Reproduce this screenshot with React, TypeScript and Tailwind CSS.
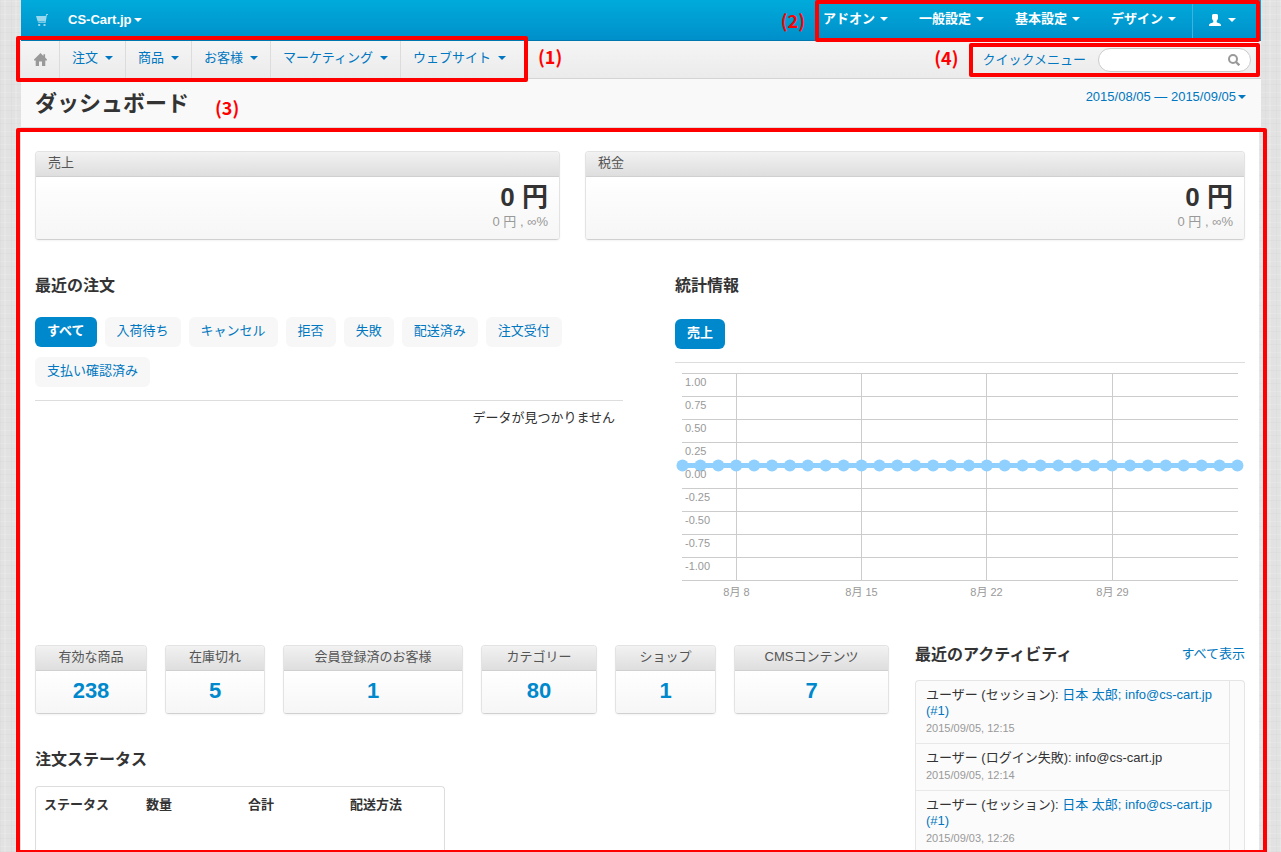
import type { ReactNode } from "react";

const topMenu = ["アドオン", "一般設定", "基本設定", "デザイン"];

const mainMenu = ["注文", "商品", "お客様", "マーケティング", "ウェブサイト"];

const orderFilters = [
  "すべて",
  "入荷待ち",
  "キャンセル",
  "拒否",
  "失敗",
  "配送済み",
  "注文受付",
  "支払い確認済み",
];

const stats = [
  { label: "有効な商品", value: 238 },
  { label: "在庫切れ", value: 5 },
  { label: "会員登録済のお客様", value: 1 },
  { label: "カテゴリー", value: 80 },
  { label: "ショップ", value: 1 },
  { label: "CMSコンテンツ", value: 7 },
];

const statusColumns = ["ステータス", "数量", "合計", "配送方法"];

const activities = [
  {
    event: "ユーザー (セッション):",
    user: "日本 太郎; info@cs-cart.jp",
    userId: "(#1)",
    date: "2015/09/05, 12:15",
  },
  {
    event: "ユーザー (ログイン失敗): info@cs-cart.jp",
    date: "2015/09/05, 12:14",
  },
  {
    event: "ユーザー (セッション):",
    user: "日本 太郎; info@cs-cart.jp",
    userId: "(#1)",
    date: "2015/09/03, 12:26",
  },
];

const Caret = () => (
  <span className="inline-block border-x-4 border-t-4 border-x-transparent border-t-current" />
);

const CartIcon = () => (
  <svg className="w-3 h-3" viewBox="0 0 12 12" fill="currentColor">
    <path d="M10.2 0H12v1h-1.1L9.5 9H2.2V8.2h6.4l.2-.8H1.7L0 2h9.7z" />
    <path d="M2.2 10h2v1.9h-2zM7.5 10h2v1.9h-2z" />
  </svg>
);

const HomeIcon = () => (
  <svg className="w-[13px] h-[13px]" viewBox="0 0 13 13" fill="currentColor">
    <path d="M6.5 0 9.4 2.9V1.3h1.7v3.3L13 6.6v.9h-1.7V13H8V8.5H5V13H1.7V7.5H0v-.9z" />
  </svg>
);

const UserIcon = () => (
  <svg className="w-3 h-3" viewBox="0 0 12 12" fill="currentColor">
    <path d="M4.5 0h3C8.500 0 9 .8 9 1.800V4c0 1.200-.6 2.200-1.300 2.700v1.500c.8.6 4.300 1 4.300 2.800v1H0v-1c0-1.800 3.500-2.200 4.300-2.800V6.700C3.600 6.200 3 5.200 3 4V1.800C3 .8 3.500 0 4.500 0z" />
  </svg>
);

const SearchIcon = () => (
  <svg
    className="w-3 h-3 shrink-0"
    viewBox="0 0 12 12"
    fill="none"
    stroke="currentColor"
  >
    <circle cx="5" cy="5" r="4" strokeWidth="2" />
    <path d="m8 8 3.3 3.3" strokeWidth="2.3" />
  </svg>
);

const Frame = ({ className }: { className: string }) => (
  <div
    className={`absolute z-10 border-4 border-[#ff0000] rounded-xs pointer-events-none ${className}`}
  />
);

const Marker = ({ children }: { children: ReactNode }) => (
  <span className="font-['Noto_Sans_CJK_JP',sans-serif] font-bold text-lg leading-5 text-[#ff0000]">
    {children}
  </span>
);

type PanelProps = {
  title: string;
  center?: boolean;
  children: ReactNode;
};

const Panel = ({ title, center, children }: PanelProps) => (
  <div
    className={`border border-[#e3e3e3] border-b-[#d0d0d0] rounded-sm shadow-xs overflow-hidden ${center ? "text-center" : ""}`}
  >
    <h3
      className={`h-[25px] leading-[22px] border-b border-[#d0d0d0] bg-linear-to-b from-[#f2f2f2] to-[#dedede] text-[#555] ${center ? "" : "px-3"}`}
    >
      {title}
    </h3>
    <div className="bg-linear-to-b from-white to-[#f6f6f6]">{children}</div>
  </div>
);

const TotalPanel = ({ title }: { title: string }) => (
  <Panel title={title}>
    <div className="h-[62px] px-[11px] pt-1 text-right">
      <p className="text-[26px] leading-8 font-bold">0 円</p>
      <p className="leading-[18px] text-[#999]">0 円 , ∞%</p>
    </div>
  </Panel>
);

const Pill = ({ label, active }: { label: string; active?: boolean }) => (
  <button
    className={`h-[30px] px-3 pb-0.5 rounded-md ${active ? "bg-[#0088cc] text-white font-bold" : "bg-[#f7f7f7] text-[#0077c0]"}`}
  >
    {label}
  </button>
);

const SalesChart = () => {
  const ticks = [
    "1.00",
    "0.75",
    "0.50",
    "0.25",
    "0.00",
    "-0.25",
    "-0.50",
    "-0.75",
    "-1.00",
  ];
  const weeks = [
    { x: 61.5, label: "8月 8" },
    { x: 186.5, label: "8月 15" },
    { x: 311.5, label: "8月 22" },
    { x: 437.5, label: "8月 29" },
  ];
  const days = Array.from({ length: 32 }, (_, i) => 7.5 + i * 17.9);

  return (
    <svg className="w-full" viewBox="0 0 570 240" fontSize="11" fill="#999">
      <g stroke="#ccc">
        {ticks.map((tick, i) => (
          <path key={tick} d={`M7 ${10.5 + i * 23}H563`} />
        ))}
        <path d="M7 217.5H563" />
        {weeks.map((week) => (
          <path key={week.x} d={`M${week.x} 10V217`} />
        ))}
      </g>
      <path d="M7.5 102.5H562.5" stroke="#8fd0ff" strokeWidth="5" />
      {days.map((x) => (
        <circle key={x} cx={x} cy="102.5" r="6" fill="#8fd0ff" />
      ))}
      {ticks.map((tick, i) => (
        <text key={tick} x="10" y={23 + i * 23}>
          {tick}
        </text>
      ))}
      {weeks.map((week) => (
        <text key={week.x} x={week.x} y="233" textAnchor="middle">
          {week.label}
        </text>
      ))}
    </svg>
  );
};

const Header = () => (
  <header>
    <div className="h-[41px] flex justify-between border-b border-[#0078ad] bg-linear-to-b from-[#00abdb] to-[#008fca] text-white font-bold">
      <div className="flex items-center pl-[15px] gap-5">
        <a href="#store" aria-label="ショップ" className="text-white/60">
          <CartIcon />
        </a>
        <button className="flex items-center gap-0.5 font-bold">
          CS-Cart.jp
          <Caret />
        </button>
      </div>
      <div className="flex items-center gap-[10px]">
        <Marker>(2)</Marker>
        <nav className="relative h-full flex">
          {topMenu.map((item) => (
            <button
              key={item}
              className="flex items-center gap-[5px] pl-[15px] pr-4 pb-0.5 first:pl-2 font-bold"
            >
              {item}
              <Caret />
            </button>
          ))}
          <button
            aria-label="アカウント"
            className="w-[69px] flex items-center gap-[7px] pl-4 border-l border-[#3db4e0]"
          >
            <UserIcon />
            <Caret />
          </button>
          <Frame className="top-0 left-0 right-px -bottom-0.5" />
        </nav>
      </div>
    </div>
    <div className="h-[38px] flex justify-between border-b border-[#d4d4d4] bg-linear-to-b from-[#f5f5f5] to-[#ebebeb] text-[#0077c0]">
      <div className="flex items-center gap-3">
        <nav className="relative h-full flex pr-2">
          <a
            href="#home"
            aria-label="ホーム"
            className="w-[39px] flex items-center justify-center border-r border-[#dcdcdc] text-[#999]"
          >
            <HomeIcon />
          </a>
          {mainMenu.map((item) => (
            <button
              key={item}
              className="flex items-center gap-[7px] px-3 pb-1 border-r border-[#dcdcdc] last-of-type:border-0"
            >
              {item}
              <Caret />
            </button>
          ))}
          <Frame className="-left-[5px] -right-0.5 -top-[5px] -bottom-1" />
        </nav>
        <span className="pb-1">
          <Marker>(1)</Marker>
        </span>
      </div>
      <div className="flex items-center gap-[10px]">
        <span className="pb-0.5">
          <Marker>(4)</Marker>
        </span>
        <div className="relative h-[34px] flex items-center pl-[14px] pr-[10px]">
          <a href="#quick" className="mr-3">
            クイックメニュー
          </a>
          <label className="w-[153px] h-6 flex items-center pr-[10px] border border-[#ccc] rounded-full bg-white text-[#999]">
            <input
              type="search"
              aria-label="検索"
              className="w-full min-w-0 pl-3 outline-none text-[#333]"
            />
            <SearchIcon />
          </label>
          <Frame className="top-0 left-0 right-px bottom-0" />
        </div>
      </div>
    </div>
    <div className="h-[49px] flex justify-between pl-[14px] pr-[15px] border-b border-[#ddd] bg-[#f9f9f9]">
      <div className="flex items-center gap-[26px]">
        <h1 className="text-[22px] font-bold">ダッシュボード</h1>
        <span className="pt-3">
          <Marker>(3)</Marker>
        </span>
      </div>
      <button className="self-start flex items-center gap-0.5 pt-2 leading-5 text-[#0077c0]">
        2015/08/05 — 2015/09/05
        <Caret />
      </button>
    </div>
  </header>
);

const RecentOrders = () => (
  <section>
    <h2 className="text-base leading-5 font-bold">最近の注文</h2>
    <div className="flex flex-wrap gap-x-2 gap-y-[10px] mt-[21px] pb-[13px] border-b border-[#ddd]">
      {orderFilters.map((label, i) => (
        <Pill key={label} label={label} active={i === 0} />
      ))}
    </div>
    <p className="pt-2 pr-2 leading-[18px] text-right">
      データが見つかりません
    </p>
  </section>
);

const Statistics = () => (
  <section>
    <h2 className="text-base leading-5 font-bold">統計情報</h2>
    <div className="mt-[23px] pb-[13px] border-b border-[#ddd]">
      <Pill label="売上" active />
    </div>
    <SalesChart />
  </section>
);

const OrderStatus = () => (
  <section className="flex-1 flex flex-col">
    <h2 className="text-base leading-5 font-bold">注文ステータス</h2>
    <div className="w-[48%] flex-1 mt-4 pt-2 border border-b-0 border-[#ddd] rounded-t-sm">
      <table className="w-full table-fixed text-left">
        <thead>
          <tr>
            {statusColumns.map((column) => (
              <th key={column} className="pl-2 leading-5">
                {column}
              </th>
            ))}
          </tr>
        </thead>
      </table>
    </div>
  </section>
);

const RecentActivity = () => (
  <section className="flex flex-col min-h-0">
    <div className="flex justify-between">
      <h2 className="text-base leading-5 font-bold">最近のアクティビティ</h2>
      <a href="#logs" className="leading-[18px] text-[#0077c0]">
        すべて表示
      </a>
    </div>
    <div className="flex-1 mt-[15px] pr-[14px] border border-b-0 border-[#e5e5e5] rounded-t-sm bg-[#fbfbfb]">
      <ul className="h-full border-r border-[#e5e5e5]">
        {activities.map((activity) => (
          <li
            key={activity.date}
            className="px-[10px] pt-1.5 pb-[7px] leading-4 border-b border-[#e8e8e8]"
          >
            {activity.event}{" "}
            {activity.user && (
              <a href="#user" className="text-[#0077c0]">
                {activity.user}
                <span className="block">{activity.userId}</span>
              </a>
            )}
            <p className="mt-px text-[11px] text-[#999]">{activity.date}</p>
          </li>
        ))}
      </ul>
    </div>
  </section>
);

export default function App() {
  return (
    <div className="h-screen flex flex-col overflow-hidden pl-[21px] pr-5 bg-[#e2e2e2] bg-[repeating-linear-gradient(0deg,rgba(0,0,0,0.02)_0px_1px,transparent_1px_5px,rgba(255,255,255,0.15)_5px_6px,transparent_6px_13px),repeating-linear-gradient(90deg,rgba(0,0,0,0.02)_0px_1px,transparent_1px_4px,rgba(255,255,255,0.15)_4px_6px,transparent_6px_11px)] font-['Liberation_Sans','Noto_Sans_CJK_JP',sans-serif] text-[13px] text-[#333]">
      <Header />
      <main className="relative flex-1 min-h-0 flex flex-col mr-0.5 pl-[14px] pr-[14px] pt-[23px] bg-white">
        <Frame className="top-0 -left-[5px] -right-2 -bottom-0.5" />
        <div className="grid grid-cols-[525fr_660fr] gap-[25px]">
          <TotalPanel title="売上" />
          <TotalPanel title="税金" />
        </div>
        <div className="grid grid-cols-[588fr_570fr] gap-[52px] mt-9">
          <RecentOrders />
          <Statistics />
        </div>
        <div className="flex-1 min-h-0 grid grid-cols-[854fr_330fr] gap-[26px] mt-[42px]">
          <div className="flex flex-col">
            <div className="grid grid-cols-[112fr_100fr_180fr_116fr_101fr_155fr] gap-[18px] mb-9">
              {stats.map((stat) => (
                <Panel key={stat.label} title={stat.label} center>
                  <a
                    href="#stat"
                    className="block h-[42px] leading-10 text-[22px] font-bold text-[#0088cc]"
                  >
                    {stat.value}
                  </a>
                </Panel>
              ))}
            </div>
            <OrderStatus />
          </div>
          <RecentActivity />
        </div>
      </main>
    </div>
  );
}
